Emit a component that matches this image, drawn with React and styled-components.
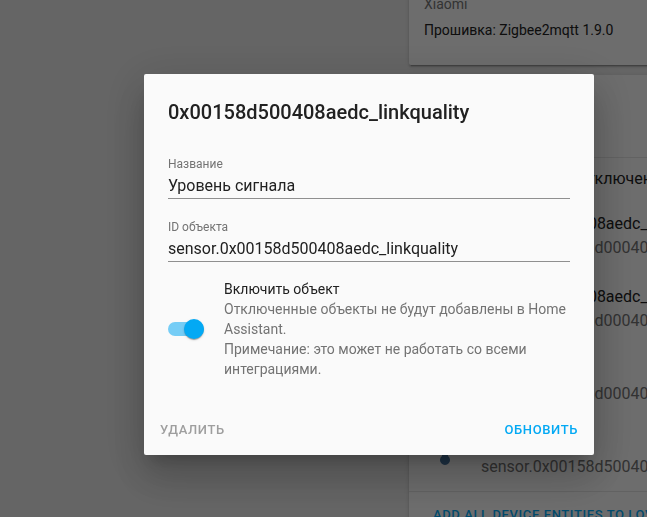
import React from "react";
import styled, { createGlobalStyle } from "styled-components";

const GlobalStyle = createGlobalStyle`
  html, body {
    margin: 0;
    padding: 0;
    background-color: #e6e6e6;
    font-family: Roboto, "Noto Sans", sans-serif;
    overflow: hidden;
  }
`;

const Page = styled.div`
  display: flex;
  width: 100vw;
  height: 100vh;
  overflow: hidden;
`;

const LeftColumn = styled.div`
  flex: 0 0 409px;
`;

const RightColumn = styled.div`
  flex: 0 0 340px;
  display: flex;
  flex-direction: column;
  gap: 10px;
`;

const Card = styled.div`
  background-color: #f8f8f8;
  border-radius: 2px;
  box-shadow: 0 2px 2px rgba(0, 0, 0, 0.14), 0 1px 5px rgba(0, 0, 0, 0.12),
    0 3px 1px -2px rgba(0, 0, 0, 0.2);
`;

const InfoCard = styled(Card)`
  margin-top: -6px;
  padding: 0 15px 25px;
  display: flex;
  flex-direction: column;
  gap: 6px;
`;

const InfoLine = styled.div`
  font-size: 14px;
  line-height: 20px;
  color: ${(p) => (p.$muted ? "#757575" : "#212121")};
`;

const EntitiesCard = styled(Card)`
  flex: 1;
  display: flex;
  flex-direction: column;
`;

const CardHeader = styled.div`
  height: 82px;
  padding: 0 16px;
  display: flex;
  align-items: center;
  font-size: 24px;
  color: #212121;
  border-bottom: 1px solid #e0e0e0;
`;

const ToggleLine = styled.div`
  height: 41px;
  padding-left: 64px;
  display: flex;
  align-items: center;
  font-size: 16px;
  color: #212121;
  white-space: nowrap;
`;

const EntityRow = styled.div`
  height: 73px;
  padding-left: 16px;
  display: flex;
  align-items: center;
  gap: 16px;
  white-space: nowrap;
`;

const Badge = styled.div`
  flex: 0 0 40px;
  height: 40px;
  display: flex;
  align-items: center;
  justify-content: center;
  color: #44739e;
`;

const RowText = styled.div`
  display: flex;
  flex-direction: column;
`;

const Primary = styled.div`
  font-size: 16px;
  line-height: 24px;
  color: #212121;
`;

const Secondary = styled.div`
  font-size: 16px;
  line-height: 24px;
  color: #727272;
`;

const CardActions = styled.div`
  border-top: 1px solid #e0e0e0;
  padding: 4px 8px;
`;

const TextButton = styled.button`
  border: none;
  background: none;
  height: 36px;
  padding: 0 ${(p) => p.$pad || 8}px;
  font-family: Roboto, "Noto Sans", sans-serif;
  font-size: 13px;
  font-weight: 500;
  letter-spacing: 0.6px;
  text-transform: uppercase;
  white-space: nowrap;
  color: ${(p) => p.$color || "#03a9f4"};
  cursor: pointer;
`;

const Overlay = styled.div`
  position: fixed;
  inset: 0;
  background-color: rgba(0, 0, 0, 0.56);
  display: flex;
  align-items: flex-start;
  padding: 74px 0 0 144px;
`;

const Dialog = styled.div`
  width: 450px;
  background-color: #fafafa;
  border-radius: 2px;
  box-shadow: 0 11px 15px -7px rgba(0, 0, 0, 0.2),
    0 24px 38px 3px rgba(0, 0, 0, 0.14), 0 9px 46px 8px rgba(0, 0, 0, 0.12);
`;

const DialogBody = styled.div`
  padding: 24px 24px 24px;
`;

const Title = styled.h2`
  margin: 0 0 30px;
  font-size: 20px;
  line-height: 28px;
  font-weight: 500;
  color: #212121;
`;

const Field = styled.div`
  display: flex;
  flex-direction: column;
  margin-bottom: ${(p) => p.$gap || 0}px;
`;

const FieldLabel = styled.label`
  font-size: 12px;
  line-height: 16px;
  color: #737373;
`;

const FieldValue = styled.div`
  margin-top: 2px;
  font-size: 16px;
  line-height: 24px;
  color: #212121;
  border-bottom: 1px solid #8f8f8f;
`;

const SwitchRow = styled.div`
  margin-top: 17px;
  display: flex;
  align-items: center;
  gap: 20px;
`;

const Switch = styled.div`
  position: relative;
  flex: 0 0 36px;
  height: 14px;
  border-radius: 7px;
  background-color: #75cdf6;
`;

const Thumb = styled.span`
  position: absolute;
  right: 0;
  top: -3px;
  width: 20px;
  height: 20px;
  border-radius: 50%;
  background-color: #03a9f4;
  box-shadow: 0 2px 1px -1px rgba(0, 0, 0, 0.2), 0 1px 1px rgba(0, 0, 0, 0.14),
    0 1px 3px rgba(0, 0, 0, 0.12);
`;

const SwitchText = styled.div`
  width: 350px;
  font-size: 14px;
  line-height: 20px;
`;

const SwitchTitle = styled.div`
  color: #212121;
`;

const SwitchHint = styled.div`
  color: #737373;
`;

const DialogActions = styled.div`
  display: flex;
  justify-content: space-between;
  padding: 8px;
`;

const rows = [
  { primary: "0x00158d500408aedc_pressure", secondary: "sensor.0x00158d000408aedc_pressure" },
  { primary: "0x00158d500408aedc_humidity", secondary: "sensor.0x00158d000408aedc_humidity" },
  { primary: "Батарея", secondary: "sensor.0x00158d000408aedc_battery" },
  { primary: "Сигнал", secondary: "sensor.0x00158d500408aedc_linkquality" },
];

function StateIcon() {
  return (
    <svg width="24" height="24" viewBox="0 0 24 24" fill="currentColor">
      <path d="M15 13V5a3 3 0 0 0-6 0v8a5 5 0 1 0 6 0z" />
    </svg>
  );
}

export default function App() {
  return (
    <>
      <GlobalStyle />
      <Page>
        <LeftColumn />
        <RightColumn>
          <InfoCard>
            <InfoLine $muted>Xiaomi</InfoLine>
            <InfoLine>Прошивка: Zigbee2mqtt 1.9.0</InfoLine>
          </InfoCard>
          <EntitiesCard>
            <CardHeader>Объекты</CardHeader>
            <ToggleLine>Показать все отключенные объекты</ToggleLine>
            {rows.map((r) => (
              <EntityRow key={r.secondary}>
                <Badge>
                  <StateIcon />
                </Badge>
                <RowText>
                  <Primary>{r.primary}</Primary>
                  <Secondary>{r.secondary}</Secondary>
                </RowText>
              </EntityRow>
            ))}
            <CardActions>
              <TextButton $pad={16}>Add all device entities to Lovelace</TextButton>
            </CardActions>
          </EntitiesCard>
        </RightColumn>
      </Page>

      <Overlay>
        <Dialog>
          <DialogBody>
            <Title>0x00158d500408aedc_linkquality</Title>
            <Field $gap={20}>
              <FieldLabel>Название</FieldLabel>
              <FieldValue>Уровень сигнала</FieldValue>
            </Field>
            <Field>
              <FieldLabel>ID объекта</FieldLabel>
              <FieldValue>sensor.0x00158d500408aedc_linkquality</FieldValue>
            </Field>
            <SwitchRow>
              <Switch>
                <Thumb />
              </Switch>
              <SwitchText>
                <SwitchTitle>Включить объект</SwitchTitle>
                <SwitchHint>
                  Отключенные объекты не будут добавлены в Home Assistant.
                </SwitchHint>
                <SwitchHint>
                  Примечание: это может не работать со всеми интеграциями.
                </SwitchHint>
              </SwitchText>
            </SwitchRow>
          </DialogBody>
          <DialogActions>
            <TextButton $color="#9e9e9e">Удалить</TextButton>
            <TextButton>Обновить</TextButton>
          </DialogActions>
        </Dialog>
      </Overlay>
    </>
  );
}
